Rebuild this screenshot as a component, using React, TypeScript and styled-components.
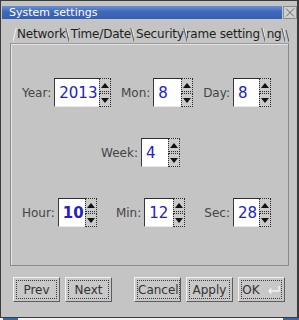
import styled, { createGlobalStyle } from 'styled-components';

const GlobalStyle = createGlobalStyle`
  html, body {
    margin: 0;
    padding: 0;
    background: #f4f4f4;
  }
  body {
    width: 299px;
    height: 320px;
    overflow: hidden;
    font-family: 'DejaVu Sans', Verdana, sans-serif;
  }
`;

const Screen = styled.div`
  width: 299px;
  height: 320px;
  display: flex;
  flex-direction: column;
`;

const Window = styled.div`
  box-sizing: border-box;
  width: 299px;
  height: 318px;
  border: 1px solid #3a3a3a;
  border-right-width: 2px;
  background: #c4c4c4;
  display: flex;
  flex-direction: column;
`;

const TitleBar = styled.div`
  margin: 5px 0 0 1px;
  height: 13px;
  display: flex;
  align-items: stretch;
`;

const TitleFill = styled.div`
  flex: 1;
  display: flex;
  align-items: center;
  padding-left: 7px;
  background: linear-gradient(to bottom, #6b8fd6 0%, #3f68b8 45%, #3560b2 100%);
  color: #ffffff;
  font-size: 11px;
  line-height: 13px;
`;

const CloseButton = styled.div`
  box-sizing: border-box;
  width: 14px;
  margin-left: 1px;
  background: #cfcfcf;
  border: 1px solid #8c8c8c;
  display: flex;
  align-items: center;
  justify-content: center;
`;

const Body = styled.div`
  flex: 1;
  display: flex;
  flex-direction: column;
  padding: 7px 8px 0 9px;
`;

const TabStrip = styled.div`
  height: 17px;
  padding-left: 3px;
  display: flex;
  align-items: flex-end;
  overflow: hidden;
`;

const Tab = styled.div<{ $first?: boolean; $width?: number; $indent?: number }>`
  position: relative;
  box-sizing: border-box;
  flex: none;
  height: 16px;
  padding: 0 3px 0 ${(p) => (p.$first ? 4 : 2)}px;
  ${(p) => (p.$width ? `width: ${p.$width}px;` : '')}
  font-size: 12px;
  letter-spacing: -0.2px;
  line-height: 15px;
  color: #1e1e1e;
  white-space: nowrap;
  overflow: hidden;
  text-indent: ${(p) => p.$indent ?? 0}px;
  &::after {
    content: '';
    position: absolute;
    right: 1px;
    top: 1px;
    width: 1px;
    height: 14px;
    background: #5a5a5a;
    box-shadow: 1px 0 0 #eeeeee;
    transform: skewX(14deg);
  }
  ${(p) =>
    p.$first &&
    `&::before {
      content: '';
      position: absolute;
      left: 1px;
      top: 1px;
      width: 1px;
      height: 14px;
      background: #f0f0f0;
      transform: skewX(-14deg);
    }`}
`;

const TabEnd = styled.div`
  flex: none;
  width: 10px;
  height: 16px;
  display: flex;
  align-items: flex-end;
`;

const Panel = styled.div`
  box-sizing: border-box;
  height: 223px;
  border: 1px solid #8a8a8a;
  border-top-color: #9a9a9a;
  box-shadow: inset 1px 1px 0 #e4e4e4;
  padding: 34px 17px 0 11px;
  display: flex;
  flex-direction: column;
  gap: 31px;
`;

const FieldRow = styled.div<{ $center?: boolean }>`
  display: flex;
  align-items: center;
  justify-content: ${(p) => (p.$center ? 'center' : 'space-between')};
  ${(p) => (p.$center ? 'padding-right: 12px;' : '')}
`;

const Field = styled.div`
  display: flex;
  align-items: center;
  gap: 3px;
`;

const Label = styled.span`
  font-size: 12px;
  color: #444444;
`;

const Spin = styled.div`
  display: flex;
  align-items: stretch;
  height: 29px;
`;

const ValueBox = styled.div<{ $width: number; $bold?: boolean }>`
  box-sizing: border-box;
  width: ${(p) => p.$width}px;
  border-top: 1px solid #2e2e2e;
  border-left: 1px solid #3a3a3a;
  border-bottom: 1px solid #e8e8e8;
  background: #ffffff;
  padding-left: 4px;
  display: flex;
  align-items: center;
  font-size: 15px;
  font-weight: ${(p) => (p.$bold ? 'bold' : 'normal')};
  color: #2222c4;
`;

const Arrows = styled.div`
  width: 12px;
  display: flex;
  flex-direction: column;
  gap: 1px;
  background: #c4c4c4;
`;

const ArrowHalf = styled.div`
  flex: 1;
  box-sizing: border-box;
  border: 1px dotted #2a2a2a;
  background: #cbcbcb;
  display: flex;
  align-items: center;
  justify-content: center;
`;

const Triangle = styled.span<{ $down?: boolean }>`
  width: 0;
  height: 0;
  border-left: 4px solid transparent;
  border-right: 4px solid transparent;
  ${(p) => (p.$down ? 'border-top: 5px solid #111;' : 'border-bottom: 5px solid #111;')}
`;

const ButtonRow = styled.div`
  margin-top: 11px;
  padding: 0 4px 0 3px;
  display: flex;
  justify-content: space-between;
`;

const ButtonGroup = styled.div`
  display: flex;
  gap: 5px;
`;

const Button = styled.div`
  box-sizing: border-box;
  width: 47px;
  height: 25px;
  padding: 2px;
  background: #c8c8c8;
  border: 1px solid;
  border-color: #f2f2f2 #5c5c5c #5c5c5c #f2f2f2;
  display: flex;
`;

const ButtonFace = styled.span`
  flex: 1;
  border: 1px dotted #3a3a3a;
  display: flex;
  align-items: center;
  justify-content: center;
  gap: 6px;
  font-size: 12px;
  color: #333333;
`;

const Taskbar = styled.div`
  flex: 1;
  display: flex;
  justify-content: space-between;
  padding: 0 0 0 3px;
`;

const TaskBlock = styled.div<{ $w: number }>`
  width: ${(p) => p.$w}px;
  background: #3a66b0;
`;

type SpinFieldProps = {
  label: string;
  value: string;
  width: number;
  bold?: boolean;
};

function SpinField({ label, value, width, bold }: SpinFieldProps) {
  return (
    <Field>
      <Label>{label}</Label>
      <Spin>
        <ValueBox $width={width} $bold={bold}>
          {value}
        </ValueBox>
        <Arrows>
          <ArrowHalf>
            <Triangle />
          </ArrowHalf>
          <ArrowHalf>
            <Triangle $down />
          </ArrowHalf>
        </Arrows>
      </Spin>
    </Field>
  );
}

export default function App() {
  return (
    <Screen>
      <GlobalStyle />
      <Window>
        <TitleBar>
          <TitleFill>System settings</TitleFill>
          <CloseButton>
            <svg width='10' height='9' viewBox='0 0 10 9'>
              <path d='M1 0.5 L9 8.5 M9 0.5 L1 8.5' stroke='#6a6a6a' strokeWidth='1' />
            </svg>
          </CloseButton>
        </TitleBar>
        <Body>
          <TabStrip>
            <Tab $first>Network</Tab>
            <Tab>Time/Date</Tab>
            <Tab>Security</Tab>
            <Tab $width={78} $indent={-9}>
              Frame setting
            </Tab>
            <Tab $width={20}>ng</Tab>
            <TabEnd>
              <svg width='10' height='14' viewBox='0 0 10 14'>
                <path d='M1 1 L4 13 M5 1 L8 13' stroke='#555' strokeWidth='1' fill='none' />
              </svg>
            </TabEnd>
          </TabStrip>
          <Panel>
            <FieldRow>
              <SpinField label='Year:' value='2013' width={45} />
              <SpinField label='Mon:' value='8' width={28} />
              <SpinField label='Day:' value='8' width={26} />
            </FieldRow>
            <FieldRow $center>
              <SpinField label='Week:' value='4' width={27} />
            </FieldRow>
            <FieldRow>
              <SpinField label='Hour:' value='10' width={27} bold />
              <SpinField label='Min:' value='12' width={29} />
              <SpinField label='Sec:' value='28' width={26} />
            </FieldRow>
          </Panel>
          <ButtonRow>
            <ButtonGroup>
              <Button>
                <ButtonFace>Prev</ButtonFace>
              </Button>
              <Button>
                <ButtonFace>Next</ButtonFace>
              </Button>
            </ButtonGroup>
            <ButtonGroup>
              <Button>
                <ButtonFace>Cancel</ButtonFace>
              </Button>
              <Button>
                <ButtonFace>Apply</ButtonFace>
              </Button>
              <Button>
                <ButtonFace>
                  OK
                  <svg width='15' height='10' viewBox='0 0 15 10'>
                    <path d='M13 1 V6 H3 M5.5 3.5 L3 6 L5.5 8.5' stroke='#f4f4f4' strokeWidth='1.4' fill='none' />
                  </svg>
                </ButtonFace>
              </Button>
            </ButtonGroup>
          </ButtonRow>
        </Body>
      </Window>
      <Taskbar>
        <TaskBlock $w={15} />
        <TaskBlock $w={16} />
      </Taskbar>
    </Screen>
  );
}
